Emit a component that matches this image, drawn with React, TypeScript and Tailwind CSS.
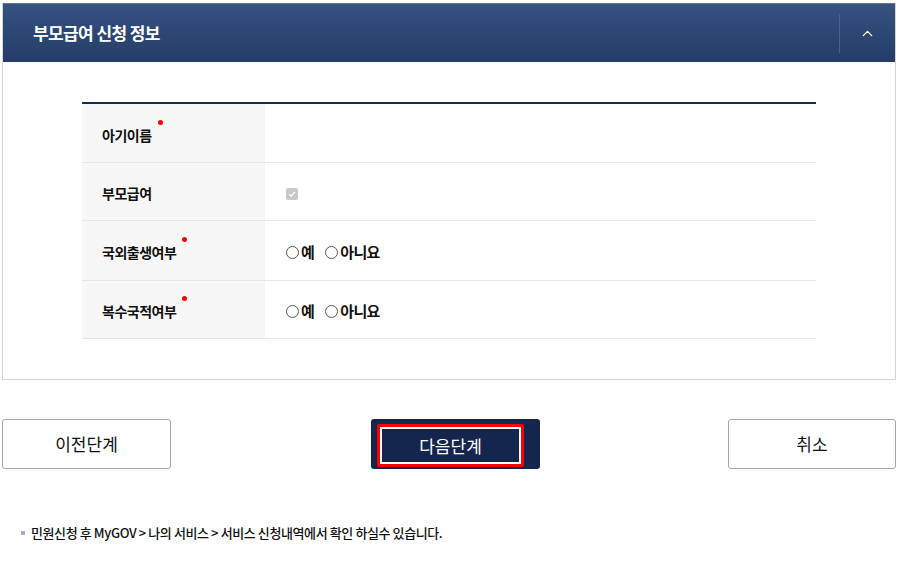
import { ChevronUp } from "lucide-react";

const font = { fontFamily: '"Noto Sans CJK KR", "Noto Sans", sans-serif' };

function Required() {
  return <span className="absolute -right-[11px] -top-[5px] h-[5px] w-[5px] rounded-full bg-[#ff0000]" />;
}

function Radio({ label }: { label: string }) {
  return (
    <label className="flex items-center gap-[2px]">
      <span className="h-[13px] w-[13px] rounded-full border border-[#555] bg-white" />
      <span className="text-[15px] font-bold text-[#111] tracking-[-0.6px]">{label}</span>
    </label>
  );
}

function Row({
  label,
  required,
  children,
  h,
}: {
  label: string;
  required?: boolean;
  children?: React.ReactNode;
  h: string;
}) {
  return (
    <div className={`flex border-b border-[#e6e6e6] ${h}`}>
      <div className="flex w-[183px] items-center bg-[#f7f7f7] pl-[20px] pt-[4px]">
        <span className="relative text-[14px] font-bold text-[#111] tracking-[-0.5px]">
          {label}
          {required ? <Required /> : null}
        </span>
      </div>
      <div className="flex flex-1 items-center gap-[11px] pl-[21px] pt-[4px]">{children}</div>
    </div>
  );
}

export default function App() {
  return (
    <div className="min-h-[577px] w-[900px] bg-white pt-[3px]" style={font}>
      <section className="ml-[2px] w-[894px] border border-t-0 border-[#d4d4d4]">
        <div className="flex h-[59px] items-center justify-between border-t border-[#5c77a6] bg-gradient-to-b from-[#36527f] to-[#243c68] pl-[30px]">
          <h2 className="text-[17px] font-bold text-white tracking-[-0.6px]">부모급여 신청 정보</h2>
          <div className="flex h-[39px] w-[56px] items-center justify-center border-l border-[#4a6291]">
            <ChevronUp className="h-[17px] w-[17px] text-white" strokeWidth={1.8} />
          </div>
        </div>
        <div className="px-[79px] pb-[40px] pt-[40px]">
          <div className="border-t-2 border-[#1a2950]">
            <Row label="아기이름" required h="h-[59px]" />
            <Row label="부모급여" h="h-[58px]">
              <span className="flex h-[12px] w-[12px] items-center justify-center rounded-[2px] bg-[#c8c8c8]">
                <svg viewBox="0 0 12 12" className="h-[10px] w-[10px]">
                  <path d="M2.5 6.2 L5 8.5 L9.5 3.5" fill="none" stroke="#fff" strokeWidth="1.6" />
                </svg>
              </span>
            </Row>
            <Row label="국외출생여부" required h="h-[60px]">
              <Radio label="예" />
              <Radio label="아니요" />
            </Row>
            <Row label="복수국적여부" required h="h-[58px]">
              <Radio label="예" />
              <Radio label="아니요" />
            </Row>
          </div>
        </div>
      </section>

      <div className="mt-[39px] flex items-center justify-between pl-[2px] pr-[4px]">
        <button className="h-[50px] w-[169px] rounded-[3px] border border-[#a8a8a8] bg-white text-[17px] text-[#111]">
          이전단계
        </button>
        <button className="ml-[12px] flex h-[50px] w-[169px] items-start rounded-[3px] bg-[#14264d] pl-[6px] pt-[5px]">
          <span className="flex h-[43px] w-[147px] items-center justify-center rounded-[2px] border-[3px] border-[#ff0000] outline-2 outline-solid outline-white -outline-offset-[5px] text-[17px] text-white">
            다음단계
          </span>
        </button>
        <button className="h-[50px] w-[168px] rounded-[3px] border border-[#a8a8a8] bg-white text-[17px] text-[#111]">
          취소
        </button>
      </div>

      <p className="mt-[54px] flex items-center pl-[21px] text-[13px] font-medium text-[#111] tracking-[-0.4px]">
        <span className="mr-[6px] h-[4px] w-[4px] bg-[#b0b0b0]" />
        민원신청 후 MyGOV &gt; 나의 서비스 &gt; 서비스 신청내역에서 확인 하실수 있습니다.
      </p>
    </div>
  );
}
